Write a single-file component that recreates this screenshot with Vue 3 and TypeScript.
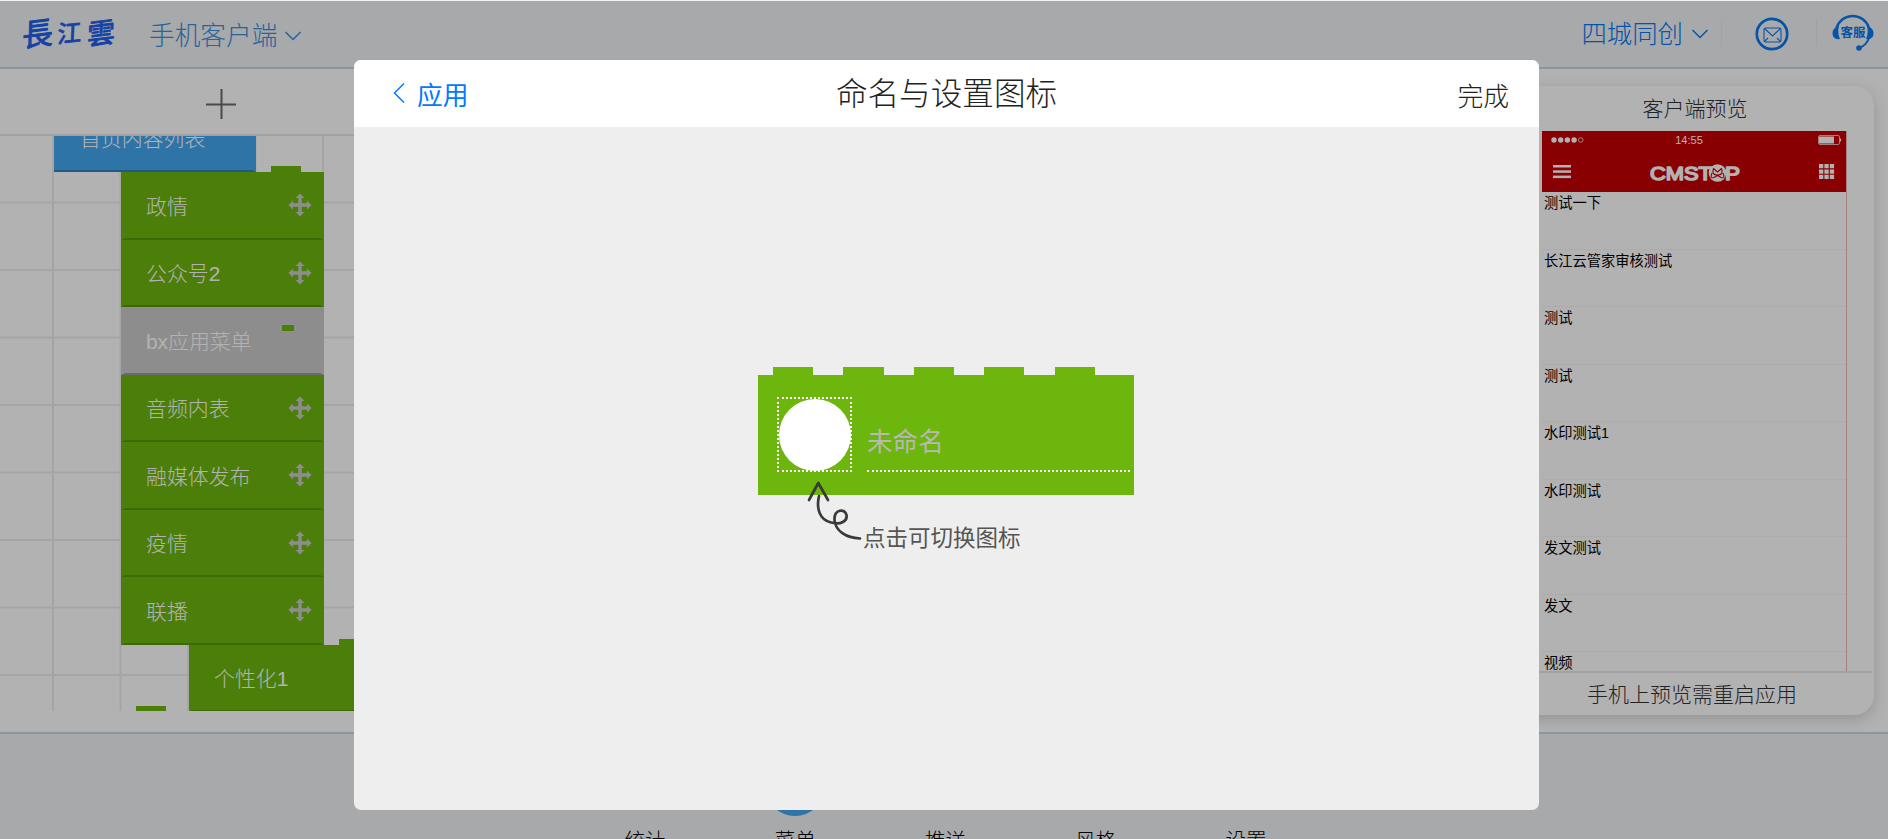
<script setup lang="ts">
interface MenuItem {
  label: string
  disabled?: boolean
}

const menuItems: MenuItem[] = [
  { label: '政情' },
  { label: '公众号2' },
  { label: 'bx应用菜单', disabled: true },
  { label: '音频内表' },
  { label: '融媒体发布' },
  { label: '疫情' },
  { label: '联播' },
]

const previewRows: string[] = [
  '测试一下', '长江云管家审核测试', '测试', '测试', '水印测试1', '水印测试', '发文测试', '发文', '视频',
]

const tabs: string[] = ['统计', '菜单', '推送', '风格', '设置']
</script>

<template>
  <div class="page">
    <header class="topbar">
      <svg class="logo" width="98" height="44" viewBox="0 0 98 44">
        <g fill="#2060ea" stroke="#2060ea" stroke-width="0.9" stroke-linejoin="round" font-weight="400">
          <text font-size="31" transform="translate(2 34) rotate(-7) skewX(-8)">長</text>
          <text font-size="24" transform="translate(37 30) rotate(-5) skewX(-8)">江</text>
          <text font-size="28" transform="translate(67 32) rotate(-7) skewX(-8)">雲</text>
        </g>
      </svg>
      <div class="client">手机客户端</div>
      <svg class="caret" width="18" height="12" viewBox="0 0 18 12"><path d="M1.500 2 L9 9.500 L16.500 2" fill="none" stroke="#3a8ee0" stroke-width="1.500" /></svg>
      <div class="spacer"></div>
      <div class="account">四城同创</div>
      <svg class="caret2" width="18" height="12" viewBox="0 0 18 12"><path d="M1.500 2 L9 9.500 L16.500 2" fill="none" stroke="#0a78f0" stroke-width="1.500" /></svg>
      <i class="sep"></i>
      <svg class="mail" width="34" height="34" viewBox="0 0 34 34" fill="none" stroke="#0a78f0">
        <circle cx="17" cy="17" r="15.200" stroke-width="2.700" />
        <rect x="9" y="11" width="17" height="14" rx="1.500" stroke-width="1.100" />
        <path d="M9.500 11.500 L17.500 19 L25.500 11.500 M9.500 24.500 L13 21 M25.500 24.500 L22 21" stroke-width="1.100" />
      </svg>
      <i class="sep"></i>
      <svg class="service" width="42" height="38" viewBox="0 0 42 38">
        <path d="M4.500 14 A17 17 0 0 1 37 14" fill="none" stroke="#0a78f0" stroke-width="2.500" />
        <path d="M37 24 Q34 32 27 34" fill="none" stroke="#0a78f0" stroke-width="2" />
        <path d="M7 12 Q0.500 14 0.500 19 Q0.500 26 8 25 Q5 18 7 12 Z M35 12 Q41.500 14 41.500 19 Q41.500 26 34 25 Q37 18 35 12 Z" fill="#0a78f0" />
        <circle cx="27" cy="34" r="2.800" fill="#0a78f0" />
        <text x="21" y="22.500" font-size="12.500" font-weight="700" text-anchor="middle" fill="#0a78f0">客服</text>
      </svg>
    </header>

    <main class="workspace">
      <section class="tree">
        <div class="addbar">
          <svg width="32" height="32" viewBox="0 0 32 32"><path d="M1 15.500 H31 M16.500 0 V30" stroke="#6b6b6b" stroke-width="2" /></svg>
        </div>
        <div class="canvas">
          <div class="root-item"><span>首页内容列表</span></div>
          <div class="group">
            <i class="stud stud-first"></i>
            <div v-for="item in menuItems" :key="item.label" class="item" :class="{ disabled: item.disabled }">
              <span>{{ item.label }}</span>
              <i v-if="item.disabled" class="mini"></i>
              <svg v-else class="move" width="24" height="24" viewBox="0 0 24 24" fill="#cbcbcb">
                <path d="M12 0.500 L16.500 5 H13.700 V10.300 H19 V7.500 L23.500 12 L19 16.500 V13.700 H13.700 V19 H16.500 L12 23.500 L7.500 19 H10.300 V13.700 H5 V16.500 L0.500 12 L5 7.500 V10.300 H10.300 V5 H7.500 Z" />
              </svg>
            </div>
          </div>
          <div class="item child"><span>个性化1</span><i class="stud stud-child"></i></div>
          <i class="stud stud-last"></i>
        </div>
      </section>

      <aside class="phone">
        <h3>客户端预览</h3>
        <div class="screen">
          <div class="app-head">
            <svg width="304" height="61" viewBox="0 0 304 61">
              <g fill="#fff">
                <circle cx="12" cy="9" r="2.700" /><circle cx="18.700" cy="9" r="2.700" /><circle cx="25.400" cy="9" r="2.700" /><circle cx="32.100" cy="9" r="2.700" />
                <circle cx="38.800" cy="9" r="2.300" fill="none" stroke="#fff" stroke-width="0.700" />
                <text x="147" y="13" font-size="11" text-anchor="middle" class="latin">14:55</text>
                <rect x="277" y="5.500" width="15" height="7" />
                <rect x="276.500" y="4.500" width="21" height="9" rx="1.500" fill="none" stroke="#fff" stroke-width="0.700" />
                <path d="M298 7 Q300.500 9 298 11 Z" />
                <rect x="11" y="34" width="18" height="2.500" /><rect x="11" y="39.300" width="18" height="2.500" /><rect x="11" y="44.600" width="18" height="2.500" />
                <path d="M277 33h4.300v4.300h-4.300z M282.400 33h4.300v4.300h-4.300z M287.800 33h4.300v4.300h-4.300z M277 38.400h4.300v4.300h-4.300z M282.400 38.400h4.300v4.300h-4.300z M287.800 38.400h4.300v4.300h-4.300z M277 43.800h4.300v4.300h-4.300z M282.400 43.800h4.300v4.300h-4.300z M287.800 43.800h4.300v4.300h-4.300z" />
                <g class="latin" font-size="18.500" font-weight="400" stroke="#fff" stroke-width="1.500" stroke-linejoin="round">
                  <text x="108" y="48.500" textLength="62" lengthAdjust="spacingAndGlyphs">CMST</text>
                  <text x="183" y="48.500" textLength="15" lengthAdjust="spacingAndGlyphs">P</text>
                </g>
                <circle cx="175.500" cy="42" r="8.800" />
                <path d="M171.500 37.500 Q169 44 175.500 44 Q182 44 179.500 37.500 M171.500 37.500 L175.500 41 L179.500 37.500 M170 42 Q167.500 48 172 46.500 L175.500 44.500 L179 46.500 Q183.500 48 181 42" fill="none" stroke="#c50004" stroke-width="1.100" />
              </g>
            </svg>
          </div>
          <div v-for="(row, i) in previewRows" :key="i" class="row">{{ row }}</div>
        </div>
        <footer>手机上预览需重启应用</footer>
      </aside>
    </main>

    <nav class="tabs">
      <div v-for="tab in tabs" :key="tab" class="tab">
        <i class="dot" :class="{ active: tab === '菜单' }"></i>
        <span>{{ tab }}</span>
      </div>
    </nav>

    <div class="mask">
      <div class="modal">
        <div class="modal-head">
          <div class="back">
            <svg width="12" height="20" viewBox="0 0 12 20"><path d="M11 0.500 L1.500 10 L11 19.500" fill="none" stroke="#007aff" stroke-width="1.500" /></svg>
            <span>应用</span>
          </div>
          <h2>命名与设置图标</h2>
          <div class="done">完成</div>
        </div>
        <div class="modal-body">
          <div class="studs"><i v-for="n in 5" :key="n"></i></div>
          <div class="brick">
            <div class="icon-box"><i></i></div>
            <div class="name-field">未命名</div>
          </div>
          <div class="hint">
            <svg width="56" height="62" viewBox="0 0 56 62" fill="none" stroke="#3a3a3a" stroke-width="2.700" stroke-linecap="round" stroke-linejoin="round">
              <path d="M2 19 L11.300 2 L21 19" />
              <path d="M12 15 C9 28 13 39 24 41.500 C34 44 40.500 40 39.500 34 C38 27 27 28 27.500 39 C28.500 50 39 57 53 57.500" />
            </svg>
            <span>点击可切换图标</span>
          </div>
        </div>
      </div>
    </div>
  </div>
</template>

<style>
html, body { overflow: hidden; }
</style>

<style scoped>
* { box-sizing: border-box; }
.page {
  position: relative; width: 1888px; height: 839px; overflow: hidden;
  display: flex; flex-direction: column; background: #fff; color: #333;
  font-family: "Liberation Sans", "Noto Sans CJK SC", sans-serif; font-weight: 300;
}
.topbar { height: 69px; flex: none; display: flex; align-items: flex-start; background: #f0f3f5; border-bottom: 2px solid #c3d8e8; }
.logo { margin: 13px 0 0 20px; flex: none; }
.client { margin-left: 31px; font-size: 25.7px; line-height: 38px; margin-top: 17px; color: #3a8ee0; white-space: nowrap; }
.caret { margin: 30px 0 0 7px; }
.spacer { flex: 1; }
.account { font-size: 25.4px; line-height: 38px; margin-top: 15px; color: #0a78f0; }
.caret2 { margin: 28px 12px 0 8px; }
.sep { width: 1px; height: 27px; margin-top: 19px; background: #e7e9eb; }
.mail { margin: 17px 27px 0 33px; }
.service { margin: 14px 14px 0 15px; }

.workspace { height: 663px; flex: none; display: flex; justify-content: space-between; }
.tree { width: 443px; }
.addbar { height: 67px; padding: 20px 0 0 205px; border-bottom: 2px solid #e9e9e9; }
.canvas {
  position: relative; height: 575px; overflow: hidden;
  background-image: linear-gradient(to right, #ededed 2px, transparent 2px), linear-gradient(#ededed 2px, transparent 2px);
  background-size: 67.5px 67.5px; background-position: 52px 0, 0 65.5px;
}
.root-item {
  width: 202px; height: 36px; margin-left: 54px; overflow: hidden; background: #43a7f0; color: #fff;
  font-size: 20.9px; padding-left: 26px; display: flex; align-items: flex-end;
  border: 0 solid transparent; border-width: 0 4px 2px 0; border-bottom-color: #2f81bd;
}
.root-item span { line-height: 30px; margin-bottom: 16px; }
.group { position: relative; width: 203px; margin-left: 121px; }
.item {
  height: 67.5px; background: #6cb60d; color: #fff; font-size: 20.9px; padding: 1px 8px 0 21px;
  display: flex; align-items: center; justify-content: space-between; white-space: nowrap;
  border: 0 solid transparent; border-width: 0 4px 2px; border-bottom-color: #58960a;
}
.item > span { margin-top: -1px; }
.item.disabled { background: #cbcbcb; border-bottom-color: #9a9a9a; color: #fff; }
.child { position: relative; width: 270px; margin-left: 189px; }
.stud { position: absolute; width: 30px; height: 6px; background: #6cb60d; }
.stud-first { left: 150px; top: -6px; }
.stud-child { left: 146px; top: -6px; }
.stud-last { left: 136px; top: 570px; }
.mini { width: 12px; height: 6px; margin: -24px 18px 0 0; background: #6cb60d; }

.phone {
  width: 358px; height: 629px; margin: 17px 14px 0 0; border-radius: 20px; background: #fff;
  box-shadow: 0 4px 16px rgba(0, 0, 0, .18); overflow: hidden; display: flex; flex-direction: column;
}
h3 { margin: 0; height: 45px; line-height: 45px; text-align: center; font-size: 21px; font-weight: 300; }
.screen { height: 540px; width: 305px; margin-left: 26px; overflow: hidden; border-right: 1px solid #f2b8b8; }
.app-head { height: 61px; background: #c50004; }
.app-head svg { display: block; }
.latin { font-family: "Liberation Sans", sans-serif; }
.row { height: 57.5px; padding: 0 0 0 2px; font-size: 14.25px; line-height: 22px; font-weight: 400; color: #000; border-bottom: 1px solid #f6f6f6; }
.phone footer { height: 44px; margin-right: 2px; border-top: 2px solid #e7e7e7; font-size: 21px; line-height: 43px; text-align: center; padding-right: 4px; }

.tabs { flex: 1; display: flex; justify-content: center; background: #f0f3f5; border-top: 2px solid #c3d8e8; padding-left: 3px; }
.tab { width: 150.3px; display: flex; flex-direction: column; align-items: center; padding-top: 22px; }
.dot { width: 60px; height: 60px; border-radius: 50%; flex: none; }
.dot.active { background: #43a7f0; }
.tab span { font-size: 20.5px; line-height: 30px; margin-top: 10px; color: #000; white-space: nowrap; flex: none; }

.mask { position: absolute; inset: 1px 0 0 0; background: rgba(0, 0, 0, .3); display: flex; align-items: flex-start; padding: 59px 0 0 354px; }
.modal { width: 1185px; height: 750px; border-radius: 7px; overflow: hidden; background: #eee; }
.modal-head { height: 67px; display: grid; grid-template-columns: 1fr auto 1fr; align-items: start; background: #fff; }
.back { display: flex; padding: 24px 0 0 39px; color: #007aff; font-size: 25.7px; font-weight: 400; }
.back span { margin: -7px 0 0 12px; line-height: 38px; }
.back svg { margin-top: -1px; }
h2 { margin: 11px 0 0; font-size: 31.6px; line-height: 46px; font-weight: 300; color: #222; }
.done { justify-self: end; padding: 18px 30px 0 0; font-size: 25.8px; line-height: 38px; color: #222; }
.modal-body { padding: 240px 0 0 404px; }
.studs { display: flex; gap: 30.2px; padding-left: 15px; height: 8px; }
.studs i { width: 40.2px; background: #6cb60d; }
.brick { width: 376px; height: 120px; background: #6cb60d; padding: 22px 4px 0 19px; display: flex; }
.icon-box { width: 75px; height: 75px; border: 2px dotted #fff; flex: none; }
.icon-box i { display: block; width: 72px; height: 72px; border-radius: 50%; background: #fff; }
.name-field { flex: 1; height: 75px; margin-left: 15px; border-bottom: 2px dotted #fff; padding-top: 26px; font-size: 25.6px; line-height: 38px; font-weight: 400; color: #b8b8b8; }
.hint { position: relative; display: flex; margin: -14px 0 0 49px; color: #555; }
.hint span { font-size: 22.5px; line-height: 34px; margin: 41px 0 0 0; font-weight: 400; }
</style>
